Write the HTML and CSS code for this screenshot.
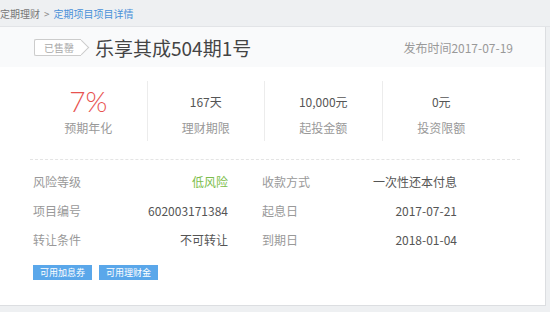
FILE: index.html
```html
<!DOCTYPE html>
<html lang="zh-CN">
<head>
  <meta charset="UTF-8" />
  <title>定期项目项目详情</title>
  <link rel="stylesheet" href="styles.css">
</head>
<body>
  <div class="crumbs">
    <span class="crumb">定期理财</span>
    <span class="sep">&gt;</span>
    <span class="crumb active">定期项目项目详情</span>
  </div>

  <div class="card">
    <div class="head">
      <span class="badge">已售罄</span>
      <h1 class="title">乐享其成504期1号</h1>
      <span class="date">发布时间2017-07-19</span>
    </div>

    <div class="stats">
      <div class="stat">
        <div class="num rate">7%</div>
        <div class="label">预期年化</div>
      </div>
      <div class="stat">
        <div class="num">167天</div>
        <div class="label">理财期限</div>
      </div>
      <div class="stat">
        <div class="num">10,000元</div>
        <div class="label">起投金额</div>
      </div>
      <div class="stat">
        <div class="num">0元</div>
        <div class="label">投资限额</div>
      </div>
    </div>

    <div class="info">
      <span class="key">风险等级</span><span class="val low">低风险</span>
      <span class="key">收款方式</span><span class="val">一次性还本付息</span>
      <span class="key">项目编号</span><span class="val">602003171384</span>
      <span class="key">起息日</span><span class="val">2017-07-21</span>
      <span class="key">转让条件</span><span class="val">不可转让</span>
      <span class="key">到期日</span><span class="val">2018-01-04</span>
    </div>

    <div class="tags">
      <span class="tag">可用加息券</span>
      <span class="tag">可用理财金</span>
    </div>
  </div>
</body>
</html>
```

FILE: styles.css
```css
* {
  box-sizing: border-box;
}
body {
  margin: 0;
  padding: 0;
  font-family: "Noto Sans CJK SC", "Noto Sans", sans-serif;
  background: #eef0f2;
  color: #555;
  height: 312px;
  overflow: hidden;
}
.crumbs {
  height: 27px;
  display: flex;
  align-items: center;
  gap: 4px;
  font-size: 10px;
  color: #777;
  border-bottom: 1px solid #e2e4e7;
}
.crumb.active {
  color: #4a90d9;
}
.sep {
  color: #888;
}
.card {
  background: #fff;
  width: 546px;
  height: 279px;
  border-right: 1px solid #dcdee1;
  border-bottom: 1px solid #dcdee1;
}
.head {
  height: 40px;
  background: #f9fafb;
  display: flex;
  align-items: center;
  padding: 0 32px 0 34px;
}
.badge {
  position: relative;
  height: 17px;
  line-height: 15px;
  padding: 0 7px 0 9px;
  font-size: 10px;
  color: #aaa;
  border: 1px solid #ccc;
  border-right: none;
  border-radius: 2px 0 0 2px;
  margin-right: 14px;
  background: #fff;
}
.badge::after {
  content: "";
  position: absolute;
  right: -6px;
  top: 2px;
  width: 10px;
  height: 10px;
  border-top: 1px solid #ccc;
  border-right: 1px solid #ccc;
  background: #fff;
  transform: rotate(45deg);
}
.title {
  margin: 0;
  font-size: 19px;
  font-weight: 400;
  color: #444;
  flex: 1;
}
.date {
  font-size: 12px;
  color: #999;
}
.stats {
  display: grid;
  grid-template-columns: repeat(4, 117.5px);
  margin: 14px 0 0 30px;
  height: 60px;
}
.stat {
  text-align: center;
  border-right: 1px solid #ececec;
  display: flex;
  flex-direction: column;
  justify-content: center;
}
.stat:last-child {
  border-right: none;
}
.num {
  font-size: 12px;
  color: #555;
  height: 26px;
  line-height: 30px;
}
.num.rate {
  font-size: 28px;
  line-height: 28px;
  color: #e8524f;
  font-family: "Lato", "Noto Sans", sans-serif;
  font-weight: 300;
}
.label {
  font-size: 12px;
  color: #999;
  margin-top: 6px;
}
.info {
  margin: 18px 0 0 30px;
  width: 490px;
  border-top: 1px dashed #e4e4e4;
  padding: 12px 0 0 3px;
  display: grid;
  grid-template-columns: 80px 115px 34px 80px 115px;
  row-gap: 9px;
  font-size: 12px;
  line-height: 20px;
}
.key {
  color: #999;
}
.val {
  text-align: right;
  color: #555;
}
.val:nth-child(4n+2) {
  grid-column: 2;
}
.key:nth-child(4n+3) {
  grid-column: 4;
}
.val.low {
  color: #7cbd4a;
}
.tags {
  display: flex;
  gap: 7px;
  margin: 15px 0 0 33px;
}
.tag {
  background: #5aa7ea;
  color: #fff;
  font-size: 9px;
  height: 15px;
  line-height: 15px;
  padding: 0 7px;
}
```
